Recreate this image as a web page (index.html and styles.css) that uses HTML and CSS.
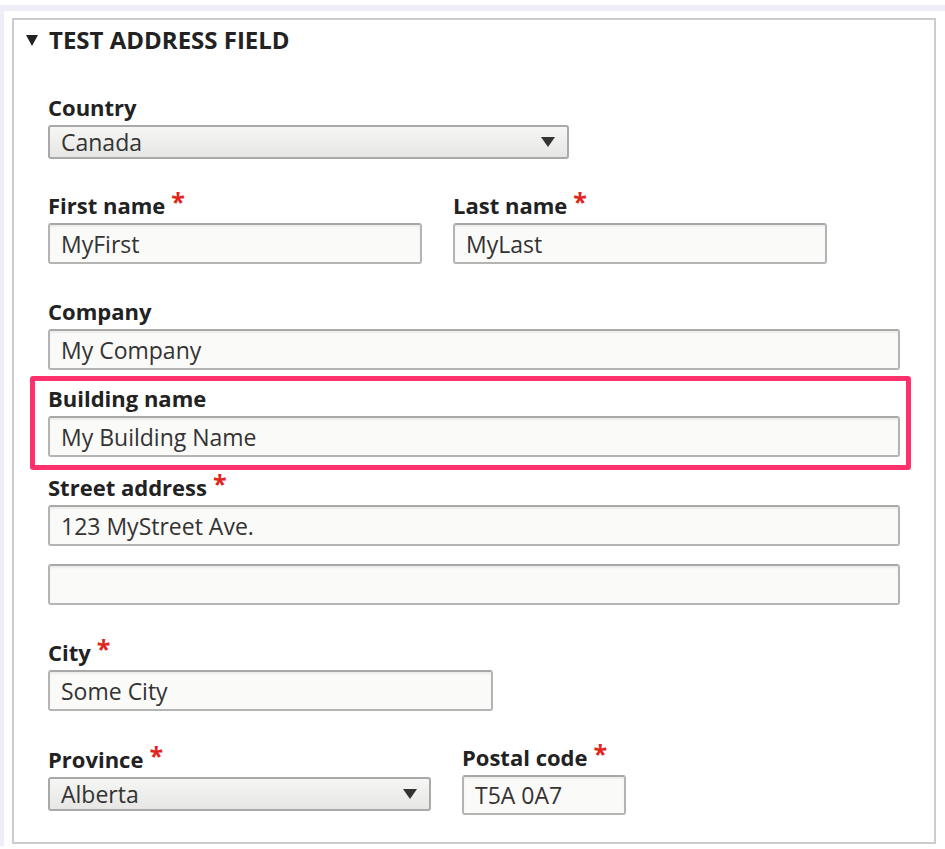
FILE: index.html
```html
<!DOCTYPE html>
<html lang="en">
<head>
<meta charset="utf-8">
<title>Test address field</title>
<link rel="stylesheet" href="styles.css">
</head>
<body>
<div class="page">
  <section class="panel">
    <div class="legend">
      <svg class="caret" width="12" height="11" viewBox="0 0 12 11"><polygon points="0,0 12,0 6,11" fill="#222"/></svg>
      <span>TEST ADDRESS FIELD</span>
    </div>

    <div class="field f-country">
      <label>Country</label>
      <div class="select w-country"><span>Canada</span><svg class="arrow" width="14" height="10" viewBox="0 0 14 10"><polygon points="0,0 14,0 7,10" fill="#333"/></svg></div>
    </div>

    <div class="row f-names">
      <div class="field">
        <label>First name<b class="req">*</b></label>
        <div class="input w-name">MyFirst</div>
      </div>
      <div class="field">
        <label>Last name<b class="req">*</b></label>
        <div class="input w-name">MyLast</div>
      </div>
    </div>

    <div class="field f-company">
      <label>Company</label>
      <div class="input w-full">My Company</div>
    </div>

    <div class="field f-building highlight">
      <label>Building name</label>
      <div class="input w-full">My Building Name</div>
    </div>

    <div class="field f-street">
      <label>Street address<b class="req">*</b></label>
      <div class="input w-full">123 MyStreet Ave.</div>
      <div class="input w-full second"></div>
    </div>

    <div class="field f-city">
      <label>City<b class="req">*</b></label>
      <div class="input w-city">Some City</div>
    </div>

    <div class="row f-province">
      <div class="field">
        <label>Province<b class="req">*</b></label>
        <div class="select w-prov"><span>Alberta</span><svg class="arrow" width="14" height="10" viewBox="0 0 14 10"><polygon points="0,0 14,0 7,10" fill="#333"/></svg></div>
      </div>
      <div class="field postal">
        <label>Postal code<b class="req">*</b></label>
        <div class="input w-postal">T5A 0A7</div>
      </div>
    </div>
  </section>
</div>
</body>
</html>
```

FILE: styles.css
```css
html, body {
  margin: 0;
  padding: 0;
  background: #fff;
}
body {
  font-family: "Open Sans", "DejaVu Sans", sans-serif;
  color: #222;
  padding-top: 5px;
}
.page {
  border-top: 6px solid #eeeef9;
  border-left: 4px solid #eeeef9;
  padding: 7px 9px 2px 8px;
}
.panel {
  margin: 0;
  border: 2px solid #cccccc;
  padding: 6px 0 0 34px;
  height: 826px;
  box-sizing: border-box;
}
.legend {
  display: flex;
  align-items: center;
  gap: 11px;
  margin-left: -22px;
  font-size: 24px;
  font-weight: 700;
  line-height: 28px;
  height: 28px;
}
.caret { display: block; }

.field { display: block; }
label {
  display: block;
  font-size: 22px;
  font-weight: 700;
  line-height: 26px;
  color: #222;
}
.req {
  color: #e3241b;
  font-weight: 700;
  font-size: 25px;
  margin-left: 6px;
  position: relative;
  top: -3px;
  line-height: 0;
}
.input, .select {
  box-sizing: border-box;
  font-size: 23px;
  color: #333;
  border-radius: 3px;
  padding-left: 11px;
  display: flex;
  align-items: center;
}
.input {
  height: 41px;
  border: 2px solid #b4b4b4;
  border-top-color: #a8a8a8;
  background: #fafaf8;
  box-shadow: inset 0 2px 2px rgba(0,0,0,0.06);
  margin-top: 5px;
}
.select {
  height: 34px;
  border: 2px solid #a9a9a9;
  background: linear-gradient(#f6f6f4, #e6e6e4);
  justify-content: space-between;
  padding-right: 12px;
  margin-top: 5px;
}
.arrow { display: block; }

.w-country { width: 521px; }
.w-name { width: 374px; }
.w-full { width: 852px; }
.w-city { width: 445px; }
.w-prov { width: 383px; }
.w-postal { width: 164px; }

.row {
  display: flex;
  gap: 31px;
}

.f-country { margin-top: 40px; }
.f-names { margin-top: 33px; }
.f-company { margin-top: 34px; }
.f-building { margin-top: 15px; position: relative; }
.f-street { margin-top: 17px; }
.input.second { margin-top: 18px; }
.f-city { margin-top: 34px; }
.f-province { margin-top: 35px; }
.postal .input { margin-top: 5px; height: 40px; }
.postal label { margin-top: -2px; }

.highlight::after {
  content: "";
  position: absolute;
  left: -18px;
  top: -9px;
  width: 881px;
  height: 94px;
  border: 5px solid #fe316c;
  border-radius: 3px;
  box-sizing: border-box;
  pointer-events: none;
}
```
